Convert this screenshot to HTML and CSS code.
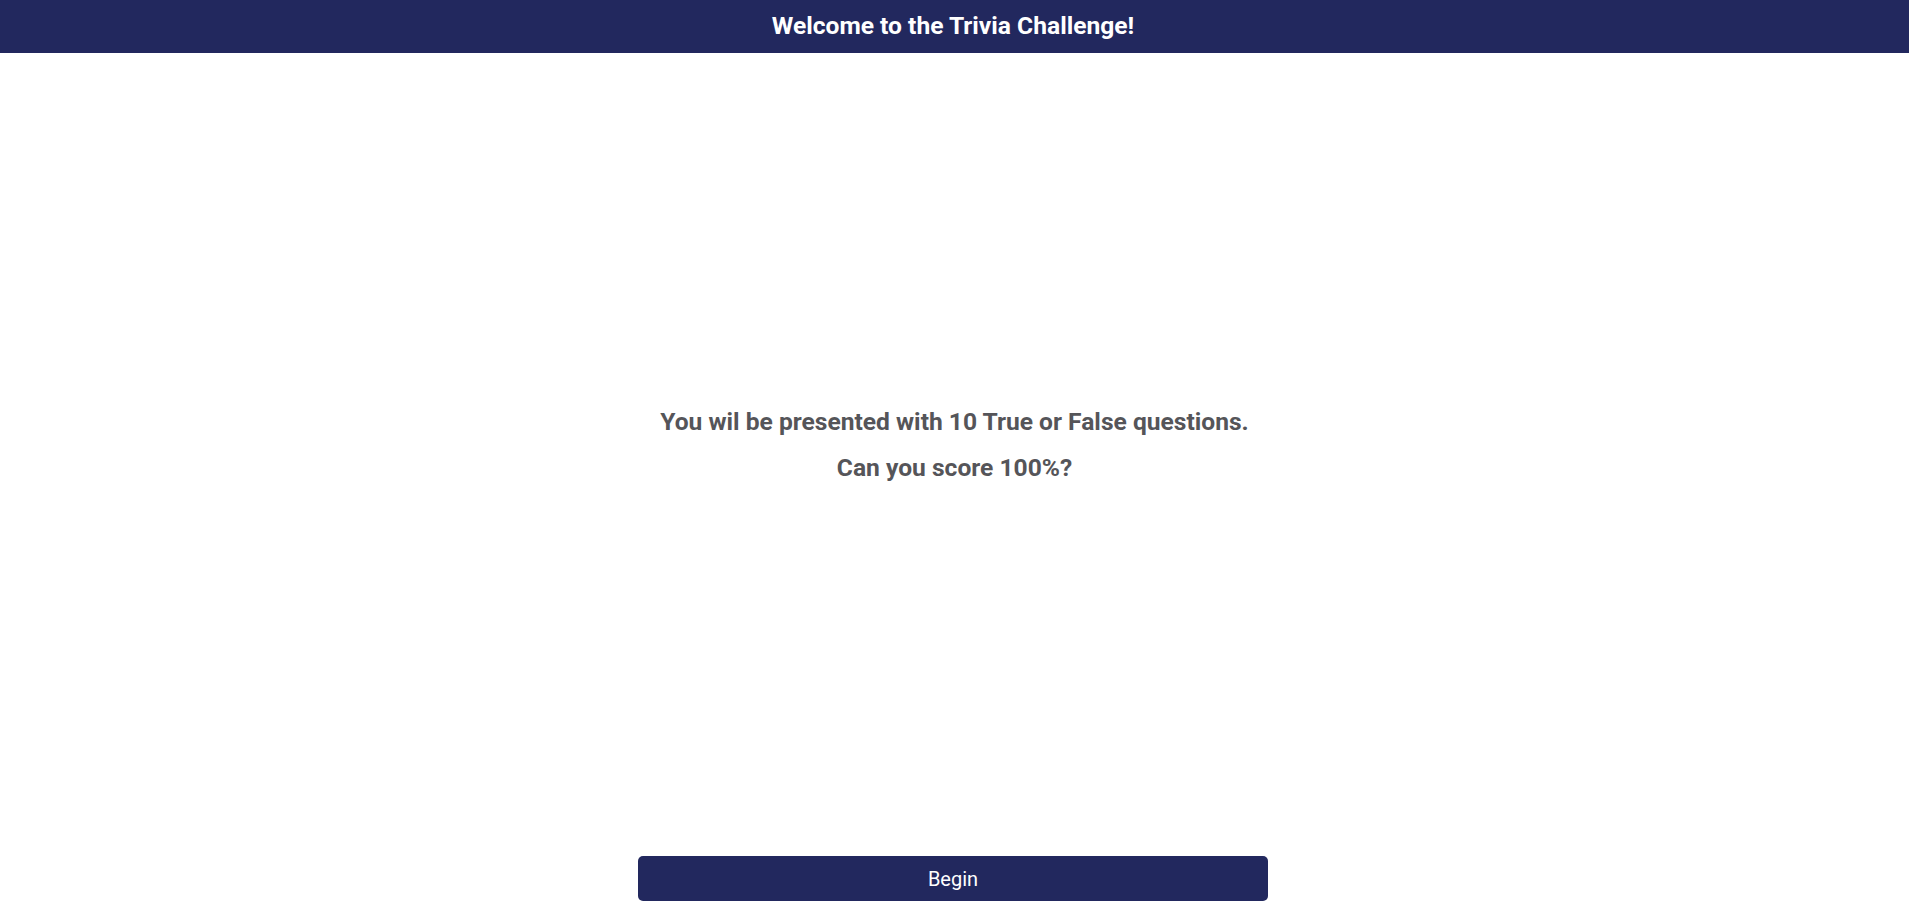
FILE: index.html
```html
<!DOCTYPE html>
<html lang="en">
<head>
<meta charset="utf-8">
<title>Trivia Challenge</title>
<link rel="stylesheet" href="styles.css">
</head>
<body>
<div class="app">
  <header class="topbar">
    <h1 class="title">Welcome to the Trivia Challenge!</h1>
  </header>
  <main class="intro">
    <p class="intro-line">You wil be presented with 10 True or False questions.</p>
    <p class="intro-line">Can you score 100%?</p>
  </main>
  <footer class="actions">
    <button class="begin-btn" type="button">Begin</button>
  </footer>
</div>
</body>
</html>
```
FILE: styles.css
```css
html, body {
  margin: 0;
  padding: 0;
  height: 100%;
  background: #ffffff;
  font-family: Roboto, "Liberation Sans", Arial, sans-serif;
}

.app {
  display: flex;
  flex-direction: column;
  height: 100vh;
}

.topbar {
  height: 53px;
  background: #22285e;
  display: flex;
  align-items: center;
  justify-content: center;
  flex-shrink: 0;
}

.title {
  margin: 0 3px 0 0;
  color: #ffffff;
  font-size: 24.6px;
  font-weight: 700;
  line-height: 1;
}

.intro {
  flex: 1;
  display: flex;
  flex-direction: column;
  align-items: center;
  justify-content: center;
  gap: 18px;
  padding-bottom: 20px;
}

.intro-line {
  margin: 0;
  color: #555559;
  font-size: 24.6px;
  font-weight: 700;
  line-height: 28px;
  text-align: center;
}

.actions {
  display: flex;
  justify-content: center;
  padding-bottom: 13px;
  flex-shrink: 0;
}

.begin-btn {
  width: 630px;
  height: 45px;
  margin-right: 3px;
  background: #22285e;
  color: #ffffff;
  border: none;
  border-radius: 5px;
  font-family: Roboto, "Liberation Sans", Arial, sans-serif;
  font-size: 20px;
  font-weight: 400;
  cursor: pointer;
}
```
